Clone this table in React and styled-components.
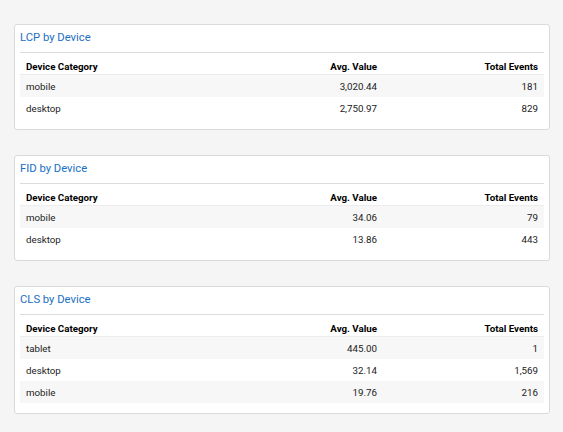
import React from "react";
import styled, { createGlobalStyle } from "styled-components";

const Global = createGlobalStyle`
  html, body { margin: 0; padding: 0; background: #f5f5f5; }
  body { font-family: Roboto, "Liberation Sans", Arial, sans-serif; color: #212121; }
`;

const Page = styled.div`
  display: flex;
  flex-direction: column;
  gap: 25px;
  padding: 24px 13px 0 14px;
`;

const Card = styled.section`
  background: #fff;
  border: 1px solid #dadada;
  border-radius: 3px;
  padding: 0 5px 10px 5px;
`;

const Title = styled.h2`
  margin: 0;
  height: 27px;
  line-height: 26px;
  font-size: 11.25px;
  font-weight: 400;
  color: #1a6fc4;
  border-bottom: 1px solid #dcdcdc;
`;

const Row = styled.div`
  display: grid;
  grid-template-columns: 202px 161px 161px;
  height: 22px;
  box-sizing: border-box;
  align-items: ${(p) => (p.$head ? "end" : "center")};
  padding: ${(p) => (p.$head ? "0 0 1px 0" : "2px 0 0 0")};
  line-height: 12px;
  font-size: 9.75px;
  font-weight: ${(p) => (p.$head ? 700 : 400)};
  color: ${(p) => (p.$head ? "#000" : "#212121")};
  background: ${(p) => (p.$shade ? "#f7f7f7" : "#fff")};
  border-bottom: ${(p) => (p.$head ? "1px solid #ececec" : "none")};
`;

const Cell = styled.div`
  padding: 0 6px;
  text-align: ${(p) => (p.$num ? "right" : "left")};
  white-space: nowrap;
`;

const data = [
  {
    title: "LCP by Device",
    rows: [
      ["mobile", "3,020.44", "181"],
      ["desktop", "2,750.97", "829"],
    ],
  },
  {
    title: "FID by Device",
    rows: [
      ["mobile", "34.06", "79"],
      ["desktop", "13.86", "443"],
    ],
  },
  {
    title: "CLS by Device",
    rows: [
      ["tablet", "445.00", "1"],
      ["desktop", "32.14", "1,569"],
      ["mobile", "19.76", "216"],
    ],
  },
];

export default function App() {
  return (
    <>
      <Global />
      <Page>
        {data.map((c) => (
          <Card key={c.title}>
            <Title>{c.title}</Title>
            <Row $head>
              <Cell>Device Category</Cell>
              <Cell $num>Avg. Value</Cell>
              <Cell $num>Total Events</Cell>
            </Row>
            {c.rows.map((r, i) => (
              <Row key={i} $shade={i % 2 === 0}>
                <Cell>{r[0]}</Cell>
                <Cell $num>{r[1]}</Cell>
                <Cell $num>{r[2]}</Cell>
              </Row>
            ))}
          </Card>
        ))}
      </Page>
    </>
  );
}
